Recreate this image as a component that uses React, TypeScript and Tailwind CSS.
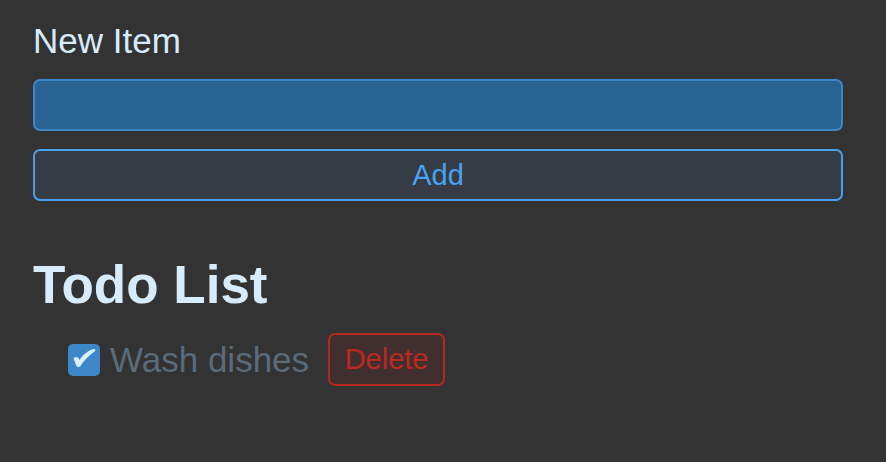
import React from "react";

export default function App() {
  return (
    <div className="min-h-screen bg-[#333333] font-['Liberation_Sans',Arial,sans-serif]">
      <div className="pl-[33px] pr-[43px] pt-[21px]">
        <label className="block text-[35px] leading-[40px] text-[#d6ecfc]">New Item</label>
        <input
          type="text"
          className="mt-[18px] block h-[52px] w-full rounded-[7px] border-2 border-[#3b88cb] bg-[#296391] px-3 text-[29px] text-white outline-none"
        />
        <button className="mt-[18px] block h-[52px] w-full rounded-[7px] border-2 border-[#4aa0ea] bg-[#363c46] text-[29px] leading-none text-[#4aa3f0]">
          Add
        </button>
        <h2 className="mt-[54px] text-[53px] font-bold leading-[60px] text-[#d6ecfc]">Todo List</h2>
        <div className="mt-[18px] flex items-center pl-[35px]">
          <svg width="32" height="32" viewBox="0 0 32 32" className="shrink-0">
            <rect x="0" y="0" width="32" height="32" rx="5" fill="#3d87c9" />
            <path
              d="M5.5 14.5 C6.5 12.5 9.5 12.5 10.5 14 L11.5 16 C14.5 11 19.5 7 25.5 5 C27.5 4.5 28 6 26.5 7.5 C20.5 12 15.5 17 12.5 22 C11.5 23.5 9 23.5 8.5 22 Z"
              fill="#dcefff"
            />
          </svg>
          <span className="ml-[10px] text-[35px] leading-[40px] text-[#5a6b7b]">Wash dishes</span>
          <button className="ml-[19px] flex h-[53px] w-[117px] items-center justify-center rounded-[7px] border-2 border-[#b3281f] bg-[#412f2f] text-[29px] leading-none text-[#b9291f]">
            Delete
          </button>
        </div>
      </div>
    </div>
  );
}
